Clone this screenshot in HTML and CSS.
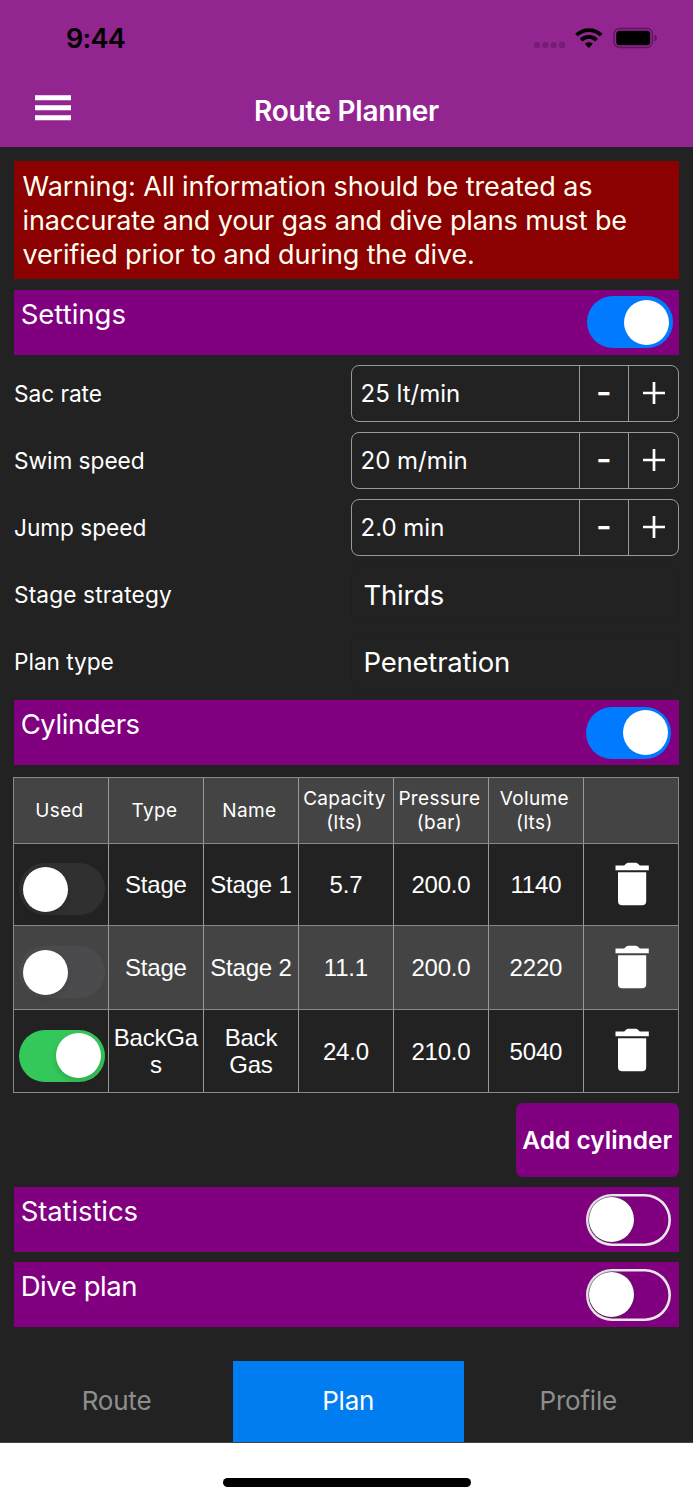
FILE: index.html
```html
<!DOCTYPE html>
<html lang="en">
<head>
<meta charset="utf-8">
<title>Route Planner</title>
<link rel="stylesheet" href="styles.css">
</head>
<body>
<svg class="defs" width="0" height="0" aria-hidden="true">
  <symbol id="trash" viewBox="0 0 34 44">
    <path d="M0.5 3.6H9.2L11 1.7Q12 0.8 13.4 0.8H20.6Q22 0.8 23 1.7L24.8 3.6H33.8V8.2H0.5Z"/>
    <path d="M3 10.2H31.2V39Q31.2 43.3 27 43.3H7.200Q3 43.3 3 39Z"/>
  </symbol>
  <symbol id="plus" viewBox="0 0 22 22">
    <path d="M0 11H22M11 0V22" fill="none" stroke="#fff" stroke-width="2.700"/>
  </symbol>
</svg>
<div class="screen">
  <header class="header">
    <div class="status">
      <span class="time">9:44</span>
      <svg class="status-icons" width="126" height="24" viewBox="0 0 126 24">
        <g fill="#751d74"><rect x="1" y="15" width="6" height="6" rx="2"/><rect x="9.300" y="15" width="6" height="6" rx="2"/><rect x="17.700" y="15" width="6" height="6" rx="2"/><rect x="26" y="15" width="6" height="6" rx="2"/></g>
        <g fill="none" stroke="#000" stroke-width="3.900">
          <path d="M43.500 8.200A17.500 17.500 0 0 1 68.200 8.200"/>
          <path d="M48.100 13.100A11 11 0 0 1 63.600 13.100"/>
        </g>
        <path d="M51.900 16.700A6 6 0 0 1 59.800 16.700L56.400 20.500Q55.850 21 55.300 20.500Z"/>
        <rect x="81" y="1.500" width="38.500" height="19" rx="5.800" fill="none" stroke="#5f175e" stroke-width="1.400"/>
        <rect x="83.200" y="3.800" width="34" height="14.400" rx="3.500"/>
        <path d="M121.500 7.500Q124 8.500 124 11T121.500 14.500Z" fill="#5f175e"/>
      </svg>
    </div>
    <div class="navbar">
      <svg class="menu" width="36" height="26" viewBox="0 0 36 26"><path fill="#fff" d="M0 .2h36v5H0zM0 10.300h36v5H0zM0 20.300h36v5H0z"/></svg>
      <h1 class="title">Route Planner</h1>
    </div>
  </header>

  <main class="content">
    <p class="warning"><span class="w1">Warning: All information should be treated as</span><br><span class="w2">inaccurate and your gas and dive plans must be</span><br><span class="w3">verified prior to and during the dive.</span></p>

    <section class="section first"><h2>Settings</h2><span class="switch blue"><i></i></span></section>

    <div class="settings">
      <div class="row"><label>Sac rate</label><div class="stepper"><span class="value">25 lt/min</span><span class="step minus">-</span><span class="step"><svg class="plus"><use href="#plus"/></svg></span></div></div>
      <div class="row"><label>Swim speed</label><div class="stepper"><span class="value">20 m/min</span><span class="step minus">-</span><span class="step"><svg class="plus"><use href="#plus"/></svg></span></div></div>
      <div class="row"><label>Jump speed</label><div class="stepper"><span class="value">2.0 min</span><span class="step minus">-</span><span class="step"><svg class="plus"><use href="#plus"/></svg></span></div></div>
      <div class="row"><label class="wide">Stage strategy</label><div class="select">Thirds</div></div>
      <div class="row"><label>Plan type</label><div class="select">Penetration</div></div>
    </div>

    <section class="section"><h2 class="tight">Cylinders</h2><span class="switch blue"><i></i></span></section>

    <div class="table">
      <div class="tr head"><span>Used</span><span>Type</span><span>Name</span><span>Capacity<br>(lts)</span><span>Pressure<br>(bar)</span><span>Volume<br>(lts)</span><span></span></div>
      <div class="tr r1"><span><b class="switch off"><i></i></b></span><span>Stage</span><span>Stage 1</span><span>5.7</span><span>200.0</span><span>1140</span><span><svg class="trash"><use href="#trash"/></svg></span></div>
      <div class="tr r2"><span><b class="switch off alt"><i></i></b></span><span>Stage</span><span>Stage 2</span><span>11.1</span><span>200.0</span><span>2220</span><span><svg class="trash"><use href="#trash"/></svg></span></div>
      <div class="tr r3"><span><b class="switch green"><i></i></b></span><span>BackGa<br>s</span><span>Back<br>Gas</span><span>24.0</span><span>210.0</span><span>5040</span><span><svg class="trash"><use href="#trash"/></svg></span></div>
    </div>

    <button class="add">Add cylinder</button>

    <section class="section"><h2>Statistics</h2><span class="switch outline"><i></i></span></section>
    <section class="section last"><h2 class="tight">Dive plan</h2><span class="switch outline"><i></i></span></section>
  </main>

  <nav class="tabs"><span>Route</span><span class="active">Plan</span><span>Profile</span></nav>
  <footer class="home"><i></i></footer>
</div>
</body>
</html>
```
FILE: styles.css
```css
* { box-sizing: border-box; }
body { margin: 0; background: #fff; font-family: Inter, "Liberation Sans", sans-serif; color: #fff; }
.defs { position: absolute; }
.screen { width: 693px; height: 1500px; display: flex; flex-direction: column; background: #222; overflow: hidden; }

.header { height: 147px; background: #922590; flex: none; }
.status { height: 74px; display: flex; justify-content: space-between; padding: 27px 34px 0 66px; }
.time { color: #000; font-size: 27px; line-height: 24px; font-weight: 600; letter-spacing: -0.700px; }
.navbar { display: grid; grid-template-columns: 1fr auto 1fr; height: 73px; padding: 0 35px; }
.menu { margin-top: 21px; }
.title { margin: 20px 0 0; font-size: 28px; line-height: 34px; font-weight: 600; letter-spacing: -0.300px; }

.content { padding: 14px 14px 0; height: 1214px; flex: none; display: flex; flex-direction: column; }
.warning { margin: 0; height: 118px; background: #8b0000; color: #fffff0; padding: 9px 8.500px 0; font-size: 27px; line-height: 34px; white-space: nowrap; }
.w1 { letter-spacing: -0.080px; }
.w2 { letter-spacing: -0.120px; }
.w3 { letter-spacing: -0.160px; }

.section { height: 65px; flex: none; margin-top: 10px; background: #800080; display: flex; justify-content: space-between; padding: 6.500px 7.700px 0 6.700px; }
.warning + .section { margin-top: 11px; }
.section.first { padding: 6px 6.500px 0 6.700px; }
.section h2 { margin: 0.500px 0 0; font-size: 27.500px; line-height: 34px; font-weight: 400; letter-spacing: -0.100px; }
.section.first h2 { margin-top: 1px; letter-spacing: 0; }
.section h2.tight { letter-spacing: -0.450px; }

.switch { display: block; flex: none; width: 85.500px; height: 52px; border-radius: 26px; padding: 3.500px; }
.switch i { display: block; width: 45px; height: 45px; border-radius: 50%; background: #fff; }
.switch.blue, .switch.green { display: flex; justify-content: flex-end; }
.switch.blue { background: #007aff; }
.switch.green { background: #34c759; }
.switch.green i { box-shadow: 0 3px 6px rgba(0,0,0,.15); }
.switch.off { background: #303031; }
.switch.off i { box-shadow: 0 3px 6px rgba(0,0,0,.12); }
.switch.off.alt { background: #4b4b4d; }
.switch.outline { box-shadow: inset 0 0 0 2.600px #e9e9ea; }
.switch.outline i { box-shadow: 0 0 2px #1c3c1c; }

.settings { display: flex; flex-direction: column; gap: 10px; margin-top: 10px; }
.row { height: 57px; display: grid; grid-template-columns: 337px 1fr; align-items: center; }
.row label { font-size: 22.700px; letter-spacing: -0.050px; }
.row label.wide { letter-spacing: 0.120px; }
.stepper, .select { height: 57px; display: flex; align-items: center; border: 1px solid #999; border-radius: 8px; }
.value { flex: 1; padding-left: 8.500px; font-size: 24px; }
.step { width: 50px; height: 55px; border-left: 1px solid #999; display: flex; align-items: center; justify-content: center; }
.minus { width: 49.500px; font-size: 34px; font-weight: 500; line-height: 55px; padding-bottom: 4px; }
.plus { width: 22px; height: 22px; margin-bottom: 1px; }
.select { border-color: #1f1f1f; padding: 0.500px 0 0 11.500px; font-size: 27.500px; letter-spacing: -0.220px; }

.table { margin: 12px 0 0 -0.600px; border: 1px solid #888; flex: none; height: 316px; display: grid; grid-template-rows: 65px 82px 84px 83px; }
.tr { display: grid; grid-template-columns: 94px repeat(6, 95px); font: 24px/27px "Liberation Sans", sans-serif; letter-spacing: -0.200px; text-align: center; }
.tr + .tr { border-top: 1px solid #888; }
.tr > span { display: flex; align-items: center; justify-content: center; min-width: 0; white-space: nowrap; }
.tr > span + span { border-left: 1px solid #999; padding-right: 1px; }
.head { background: #444; font: 19px/24px Inter, sans-serif; letter-spacing: 0.350px; }
.head > span, .head > span + span { padding-right: 4px; }
.r2 { background: #444; }
.table .switch { margin: 9px -1px 0 0; }
.trash { width: 34px; height: 44px; fill: #fff; margin: 0 0 2px 3px; }

.add { align-self: flex-end; flex: none; width: 163.500px; height: 74px; margin-top: 10px; padding: 0; border: 0; border-radius: 7px; background: #800080; color: #fff; font: 600 24.500px/30px Inter, sans-serif; }

.tabs { height: 82px; flex: none; display: grid; grid-template-columns: 233px 230.500px 1fr; border-bottom: 1.500px solid #444; }
.tabs span { display: flex; align-items: center; justify-content: center; padding-bottom: 2px; font-size: 26px; letter-spacing: -0.200px; color: #8e8e8e; }
.tabs .active { background: #007df0; color: #fff; }
.home { flex: 1; background: #fff; display: flex; justify-content: center; padding-top: 35px; }
.home i { width: 248px; height: 8.500px; border-radius: 5px; background: #000; }
```
